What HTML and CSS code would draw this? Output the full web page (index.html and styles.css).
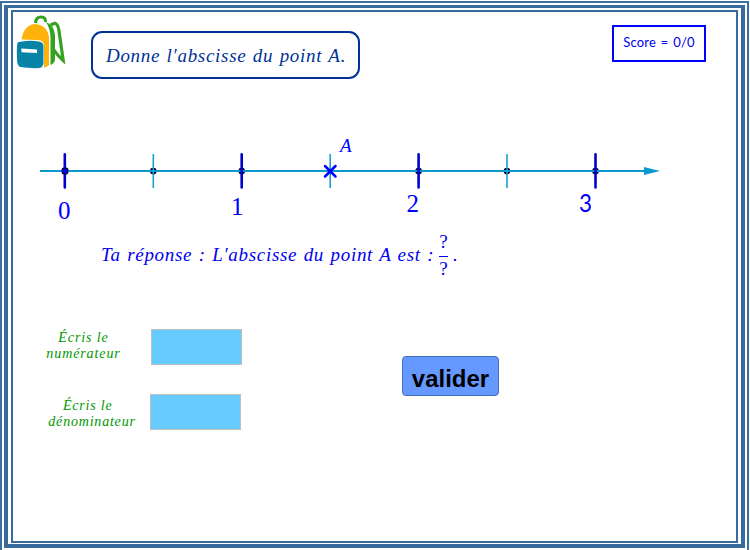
FILE: index.html
```html
<!DOCTYPE html>
<html lang="fr">
<head>
<meta charset="utf-8">
<title>Abscisse d'un point</title>
<link rel="stylesheet" href="styles.css">
</head>
<body>
<div class="frame-outer"><div class="frame-middle"><main class="frame-inner">
  <header class="top">
    <svg class="bag" viewBox="16 14 52 56" width="52" height="56">
      <path d="M35.500 23Q36 17 41 17Q46 17 45.500 22" fill="none" stroke="#35a31f" stroke-width="3.200"/>
      <path d="M46 22Q54 25 55 35V60Q54 64 50.500 65V37Q50 28 46 22Z" fill="#35a31f"/>
      <path d="M50.500 25L55 23.200Q58 24 59 31L63.200 60.500Q57 55 54 50" fill="none" stroke="#35a31f" stroke-width="3.200"/>
      <path d="M21.500 39.500Q24 24 36 24Q47 25 49 37V65Q46 68 42 68H44V47Q44 40 38 40Z" fill="#ffb20a"/>
      <path d="M22 41.500Q30 40 39 41.500Q43 42 43.500 46V63Q43 67 40 68Q29 68.500 20 67Q17 66 17 58Q16.500 48 17.500 43Q18 41.500 22 41.500Z" fill="#0784a5"/>
      <path d="M21.300 48.500L37 49.500V53L21.500 52.300Z" fill="#fff"/>
    </svg>
    <h1 class="title">Donne l′abscisse du point A.</h1>
    <div class="score">Score = 0/0</div>
  </header>
  <svg class="line" viewBox="13 130 723 95" width="723" height="95">
    <g class="dots">
      <circle cx="65" cy="171" r="3"/><circle cx="153.300" cy="171" r="2.700"/><circle cx="241.700" cy="171" r="2.700"/>
      <circle cx="418.600" cy="171" r="2.700"/><circle cx="507" cy="171" r="2.700"/><circle cx="595.500" cy="171" r="2.700"/>
    </g>
    <path class="axis" d="M40 171H646"/>
    <path class="arrow" d="M644 167L660 171L644 175Z"/>
    <path class="half" d="M153.300 154V188M330.200 154V188M507 154V188"/>
    <path class="unit" d="M64.800 154.300V187.500M241.700 154.300V187.500M418.600 154.300V187.500M595.500 154.300V187.500"/>
    <circle cx="65" cy="171" r="3" fill="#0000f0" stroke="#00003c"/>
    <path class="cross" d="M325 166L335.500 176.500M335.500 166L325 176.500"/>
    <g class="nums">
      <text x="58" y="219">0</text>
      <text x="231" y="215">1</text>
      <text x="406.500" y="212">2</text>
      <text class="sans" x="579" y="211.500" textLength="13" lengthAdjust="spacingAndGlyphs">3</text>
      <text class="name" x="340" y="152">A</text>
    </g>
  </svg>
  <p class="answer"><span class="sentence">Ta réponse : L′abscisse du point A est :</span><span class="fraction"><span>?</span><span>?</span></span><span>.</span></p>
  <form class="entry">
    <div class="fields">
      <label class="field"><span class="label">Écris le<br>numérateur</span><input class="box" type="text"></label>
      <label class="field second"><span class="label">Écris le &nbsp;<br>dénominateur</span><input class="box" type="text"></label>
    </div>
    <button class="check" type="button">valider</button>
  </form>
</main></div></div>
</body>
</html>
```
FILE: styles.css
```css
* { box-sizing: border-box; }
html, body { height: 100%; }
body { margin: 0; overflow: hidden; background: #fff; color: #0000f0; font-family: "Liberation Serif", serif; }
.frame-outer { width: 749px; height: 554px; margin-top: 1px; border: 2px solid #3a6fa0; padding: 2px; }
.frame-middle { width: 741px; height: 543px; border: solid #386b9c; border-width: 3px 4px 4px; padding: 2px 3px; }
.frame-inner { width: 727px; height: 533px; border: 2px solid #386b9c; }
.top { display: flex; align-items: flex-start; height: 118px; padding: 2px 0 0 3px; }
.bag { flex: none; }
.title { width: 269px; height: 48px; margin: 17px 252px 0 23px; border: 2px solid #003296; border-radius: 11px; padding-left: 13px; color: #003296; font-size: 19px; font-weight: 400; font-style: italic; line-height: 45px; letter-spacing: .7px; word-spacing: 1px; white-space: nowrap; }
.score { width: 94px; height: 37px; margin-top: 11px; border: 2px solid #0000ff; text-align: center; font: 13px/31px Lato, sans-serif; letter-spacing: .25px; word-spacing: 1px; white-space: nowrap; }
.line { display: block; }
.axis { stroke: #0898cc; stroke-width: 2; }
.arrow { fill: #0898cc; }
.half { stroke: #1a9fcf; stroke-width: 1.6; }
.unit { stroke: #0000cd; stroke-width: 2.6; stroke-linecap: round; }
.dots circle { fill: #0000b0; stroke: #000028; stroke-width: 1.3; }
.cross { stroke: #0000ff; stroke-width: 2.5; stroke-linecap: round; }
.nums { fill: #0000ff; font-size: 25px; }
.nums .sans { font: 25px Lato, sans-serif; }
.nums .name { font-size: 19px; font-style: italic; }
.answer { display: flex; align-items: center; height: 60px; margin: 0; padding-left: 88px; font-size: 19px; font-style: italic; white-space: nowrap; }
.sentence { width: 338px; letter-spacing: .7px; word-spacing: 1px; }
.fraction { display: flex; flex-direction: column; width: 9px; margin: 3px 5px 0 0; text-align: center; font-style: normal; }
.fraction span { height: 24px; line-height: 23px; }
.fraction span:first-child { border-bottom: 1px solid #0000f0; line-height: 18px; }
.entry { display: flex; margin: 0; padding-top: 44px; }
.fields { width: 389px; }
.field { display: flex; width: 229px; height: 36px; padding-left: 23px; }
.second { width: 228px; margin-top: 29px; padding-left: 34px; }
.label { width: 95px; padding-top: 1px; text-align: center; color: #009600; font-size: 14px; font-style: italic; line-height: 16px; letter-spacing: .9px; white-space: nowrap; }
.second .label { width: 90px; padding-top: 4px; letter-spacing: .8px; }
.box { width: 91px; height: 36px; margin-left: auto; border: 1px solid #bebebe; border-radius: 0; padding: 4px; background: #66ccff; color: #0000f0; font: 20px "Liberation Sans", sans-serif; outline: none; }
.check { width: 97px; height: 40px; margin-top: 27px; border: 1px solid #466ebe; border-radius: 4px; padding: 5px 0 0; background: #6699ff; color: #000; font: bold 24px/34px "Liberation Sans", sans-serif; }
```
